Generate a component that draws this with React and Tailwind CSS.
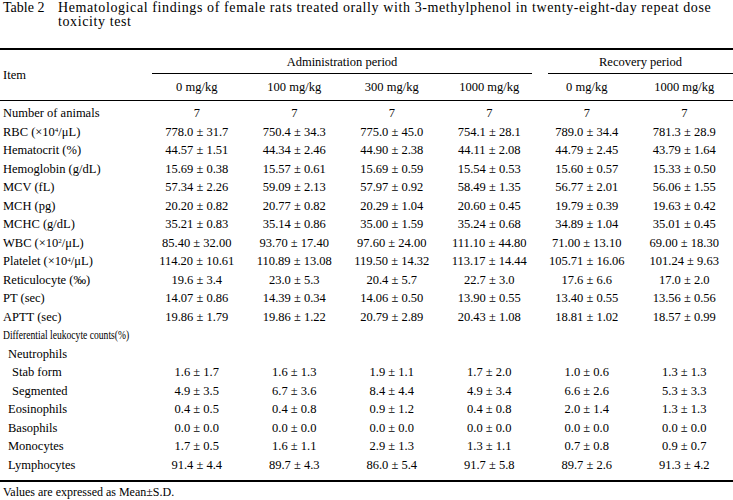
const cols = ["0 mg/kg", "100 mg/kg", "300 mg/kg", "1000 mg/kg", "0 mg/kg", "1000 mg/kg"];

const rows = [
  { item: "Number of animals", v: ["7", "7", "7", "7", "7", "7"] },
  { item: <>RBC (×10<sup className="text-[7px]">4</sup>/μL)</>, v: ["778.0 ± 31.7", "750.4 ± 34.3", "775.0 ± 45.0", "754.1 ± 28.1", "789.0 ± 34.4", "781.3 ± 28.9"] },
  { item: "Hematocrit (%)", v: ["44.57 ± 1.51", "44.34 ± 2.46", "44.90 ± 2.38", "44.11 ± 2.08", "44.79 ± 2.45", "43.79 ± 1.64"] },
  { item: "Hemoglobin (g/dL)", v: ["15.69 ± 0.38", "15.57 ± 0.61", "15.69 ± 0.59", "15.54 ± 0.53", "15.60 ± 0.57", "15.33 ± 0.50"] },
  { item: "MCV (fL)", v: ["57.34 ± 2.26", "59.09 ± 2.13", "57.97 ± 0.92", "58.49 ± 1.35", "56.77 ± 2.01", "56.06 ± 1.55"] },
  { item: "MCH (pg)", v: ["20.20 ± 0.82", "20.77 ± 0.82", "20.29 ± 1.04", "20.60 ± 0.45", "19.79 ± 0.39", "19.63 ± 0.42"] },
  { item: "MCHC (g/dL)", v: ["35.21 ± 0.83", "35.14 ± 0.86", "35.00 ± 1.59", "35.24 ± 0.68", "34.89 ± 1.04", "35.01 ± 0.45"] },
  { item: <>WBC (×10<sup className="text-[7px]">2</sup>/μL)</>, v: ["85.40 ± 32.00", "93.70 ± 17.40", "97.60 ± 24.00", "111.10 ± 44.80", "71.00 ± 13.10", "69.00 ± 18.30"] },
  { item: <>Platelet (×10<sup className="text-[7px]">4</sup>/μL)</>, v: ["114.20 ± 10.61", "110.89 ± 13.08", "119.50 ± 14.32", "113.17 ± 14.44", "105.71 ± 16.06", "101.24 ± 9.63"] },
  { item: "Reticulocyte (‰)", v: ["19.6 ± 3.4", "23.0 ± 5.3", "20.4 ± 5.7", "22.7 ± 3.0", "17.6 ± 6.6", "17.0 ± 2.0"] },
  { item: "PT (sec)", v: ["14.07 ± 0.86", "14.39 ± 0.34", "14.06 ± 0.50", "13.90 ± 0.55", "13.40 ± 0.55", "13.56 ± 0.56"] },
  { item: "APTT (sec)", v: ["19.86 ± 1.79", "19.86 ± 1.22", "20.79 ± 2.89", "20.43 ± 1.08", "18.81 ± 1.02", "18.57 ± 0.99"] },
  { item: "Differential leukocyte counts(%)", small: true },
  { item: "Neutrophils", indent: 1 },
  { item: "Stab form", indent: 2, v: ["1.6 ± 1.7", "1.6 ± 1.3", "1.9 ± 1.1", "1.7 ± 2.0", "1.0 ± 0.6", "1.3 ± 1.3"] },
  { item: "Segmented", indent: 2, v: ["4.9 ± 3.5", "6.7 ± 3.6", "8.4 ± 4.4", "4.9 ± 3.4", "6.6 ± 2.6", "5.3 ± 3.3"] },
  { item: "Eosinophils", indent: 1, v: ["0.4 ± 0.5", "0.4 ± 0.8", "0.9 ± 1.2", "0.4 ± 0.8", "2.0 ± 1.4", "1.3 ± 1.3"] },
  { item: "Basophils", indent: 1, v: ["0.0 ± 0.0", "0.0 ± 0.0", "0.0 ± 0.0", "0.0 ± 0.0", "0.0 ± 0.0", "0.0 ± 0.0"] },
  { item: "Monocytes", indent: 1, v: ["1.7 ± 0.5", "1.6 ± 1.1", "2.9 ± 1.3", "1.3 ± 1.1", "0.7 ± 0.8", "0.9 ± 0.7"] },
  { item: "Lymphocytes", indent: 1, v: ["91.4 ± 4.4", "89.7 ± 4.3", "86.0 ± 5.4", "91.7 ± 5.8", "89.7 ± 2.6", "91.3 ± 4.2"] },
];

const indentCls = ["pl-[3px]", "pl-[8px]", "pl-[12px]"];

export default function App() {
  return (
    <div className="w-[733px] h-[500px] bg-white text-black font-['Liberation_Serif',serif] overflow-hidden">
      {/* Title */}
      <div className="flex pt-[1px] pl-[3px] text-[14px] leading-[14px] h-[48px]">
        <div className="w-[55px] shrink-0">Table 2</div>
        <div className="tracking-[0.6px] whitespace-nowrap">
          Hematological findings of female rats treated orally with 3-methylphenol in twenty-eight-day repeat dose
          <br />
          toxicity test
        </div>
      </div>

      {/* Header */}
      <div className="border-t-2 border-black border-b grid grid-cols-[148px_repeat(6,1fr)] text-[12.5px]">
        <div className="row-span-2 flex items-center pl-[3px]">Item</div>
        <div className="col-span-4 ml-[4px] mr-[6px] h-[24px] border-b border-black flex items-center justify-center pt-[1px]">
          Administration period
        </div>
        <div className="col-span-2 ml-[10px] h-[24px] border-b border-black flex items-center justify-center pt-[1px]">
          Recovery period
        </div>
        {cols.map((c, i) => (
          <div key={i} className="h-[26px] flex items-center justify-center pt-[1px]">
            {c}
          </div>
        ))}
      </div>

      {/* Body */}
      <div className="pt-[3px] pb-[6px] border-b-2 border-black text-[12.5px]">
        {rows.map((r, i) => (
          <div key={i} className="grid grid-cols-[148px_repeat(6,1fr)] h-[18.5px] items-center">
            <div className={`${indentCls[r.indent || 0]} whitespace-nowrap`}>
              {r.small ? (
                <span className="inline-block text-[12px] scale-x-[0.8] origin-left">{r.item}</span>
              ) : (
                r.item
              )}
            </div>
            {(r.v || []).map((v, j) => (
              <div key={j} className="text-center whitespace-nowrap">
                {v}
              </div>
            ))}
          </div>
        ))}
      </div>

      <div className="pl-[3px] pt-[3px] text-[12px] leading-[14px]">Values are expressed as Mean±S.D.</div>
    </div>
  );
}
